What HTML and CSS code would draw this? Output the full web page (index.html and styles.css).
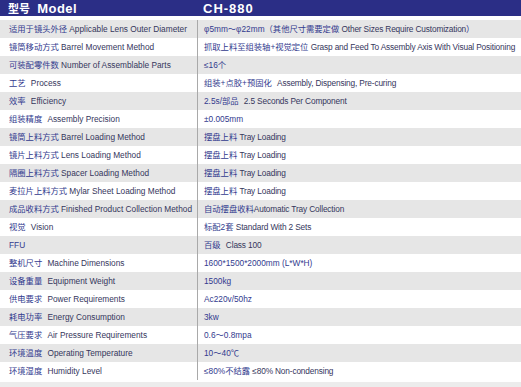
FILE: index.html
```html
<!DOCTYPE html>
<html lang="zh">
<head>
<meta charset="utf-8">
<title>CH-880</title>
<link rel="stylesheet" href="styles.css">
</head>
<body>
<div class="sheet">
  <div class="head">
    <div class="head-l"><span class="hz">型号</span> <span class="hm">Model</span></div>
    <div class="head-r">CH-880</div>
  </div>
  <div class="spec">
    <div class="row odd"><div class="k"><span class="zh">适用于镜头外径</span> <span class="en">Applicable Lens Outer Diameter</span></div><div class="v"><span class="zh">φ5mm～φ22mm（其他尺寸需要定做</span> <span class="en">Other Sizes Require Customization</span><span class="zh">）</span></div></div>
    <div class="row"><div class="k"><span class="zh">镜筒移动方式</span> <span class="en">Barrel Movement Method</span></div><div class="v"><span class="zh">抓取上料至组装轴+视觉定位</span> <span class="en">Grasp and Feed To Assembly Axis With Visual Positioning</span></div></div>
    <div class="row odd"><div class="k"><span class="zh">可装配零件数</span> <span class="en">Number of Assemblable Parts</span></div><div class="v"><span class="zh">≤16个</span></div></div>
    <div class="row"><div class="k"><span class="zh">工艺</span> <span class="en gap">Process</span></div><div class="v"><span class="zh">组装+点胶+预固化</span> <span class="en gap">Assembly, Dispensing, Pre-curing</span></div></div>
    <div class="row odd"><div class="k"><span class="zh">效率</span> <span class="en gap">Efficiency</span></div><div class="v"><span class="zh">2.5s/部品</span> <span class="en gap">2.5 Seconds Per Component</span></div></div>
    <div class="row"><div class="k"><span class="zh">组装精度</span> <span class="en gap">Assembly Precision</span></div><div class="v"><span class="zh">±0.005mm</span></div></div>
    <div class="row odd"><div class="k"><span class="zh">镜筒上料方式</span> <span class="en">Barrel Loading Method</span></div><div class="v"><span class="zh">摆盘上料</span> <span class="en">Tray Loading</span></div></div>
    <div class="row"><div class="k"><span class="zh">镜片上料方式</span> <span class="en">Lens Loading Method</span></div><div class="v"><span class="zh">摆盘上料</span> <span class="en">Tray Loading</span></div></div>
    <div class="row odd"><div class="k"><span class="zh">隔圈上料方式</span> <span class="en">Spacer Loading Method</span></div><div class="v"><span class="zh">摆盘上料</span> <span class="en">Tray Loading</span></div></div>
    <div class="row"><div class="k"><span class="zh">麦拉片上料方式</span> <span class="en">Mylar Sheet Loading Method</span></div><div class="v"><span class="zh">摆盘上料</span> <span class="en">Tray Loading</span></div></div>
    <div class="row odd"><div class="k"><span class="zh">成品收料方式</span> <span class="en">Finished Product Collection Method</span></div><div class="v"><span class="zh">自动摆盘收料</span><span class="en">Automatic Tray Collection</span></div></div>
    <div class="row"><div class="k"><span class="zh">视觉</span> <span class="en gap">Vision</span></div><div class="v"><span class="zh">标配2套</span> <span class="en">Standard With 2 Sets</span></div></div>
    <div class="row odd"><div class="k"><span class="zh">FFU</span></div><div class="v"><span class="zh">百级</span> <span class="en gap">Class 100</span></div></div>
    <div class="row"><div class="k"><span class="zh">整机尺寸</span> <span class="en gap">Machine Dimensions</span></div><div class="v"><span class="zh">1600*1500*2000mm (L*W*H)</span></div></div>
    <div class="row odd"><div class="k"><span class="zh">设备重量</span> <span class="en gap">Equipment Weight</span></div><div class="v"><span class="zh">1500kg</span></div></div>
    <div class="row"><div class="k"><span class="zh">供电要求</span> <span class="en gap">Power Requirements</span></div><div class="v"><span class="zh">Ac220v/50hz</span></div></div>
    <div class="row odd"><div class="k"><span class="zh">耗电功率</span> <span class="en gap">Energy Consumption</span></div><div class="v"><span class="zh">3kw</span></div></div>
    <div class="row"><div class="k"><span class="zh">气压要求</span> <span class="en gap">Air Pressure Requirements</span></div><div class="v"><span class="zh">0.6～0.8mpa</span></div></div>
    <div class="row odd"><div class="k"><span class="zh">环境温度</span> <span class="en gap">Operating Temperature</span></div><div class="v"><span class="zh">10～40℃</span></div></div>
    <div class="row"><div class="k"><span class="zh">环境湿度</span> <span class="en gap">Humidity Level</span></div><div class="v"><span class="zh">≤80%不结露</span> <span class="en">≤80% Non-condensing</span></div></div>
  </div>
  <div class="foot"></div>
</div>
</body>
</html>
```
FILE: styles.css
```css
html, body {
  margin: 0;
  padding: 0;
  background: #ffffff;
}
.sheet {
  width: 521px;
  font-family: "Liberation Sans", "Noto Sans CJK SC", sans-serif;
}
.head {
  display: grid;
  grid-template-columns: 197px 1fr;
  height: 16px;
  background: #2b2e86;
  color: #ffffff;
  font-weight: bold;
  align-items: center;
  margin-bottom: 4px;
}
.head-l {
  padding-left: 8px;
  font-size: 12px;
  line-height: 16px;
  white-space: nowrap;
}
.hz {
  font-size: 11px;
  font-family: "Noto Sans CJK SC", sans-serif;
  font-weight: bold;
}
.hm {
  font-size: 13px;
  letter-spacing: 0.4px;
  margin-left: 4px;
}
.head-r {
  padding-left: 6px;
  font-size: 13px;
  letter-spacing: 1px;
  line-height: 16px;
}
.spec {
  display: flex;
  flex-direction: column;
}
.row {
  display: grid;
  grid-template-columns: 197px 1fr;
  height: 18px;
  align-items: center;
  background: #ffffff;
}
.row.odd {
  background: #e6e6e6;
}
.k, .v {
  white-space: nowrap;
  font-size: 8px;
  line-height: 18px;
  height: 18px;
  overflow: hidden;
}
.k {
  padding-left: 9px;
}
.v {
  padding-left: 6px;
  border-left: 1px solid #a9a9a9;
}
.zh {
  color: #323a8e;
  font-family: "Liberation Sans", "Noto Sans CJK SC", sans-serif;
  font-size: 8.3px;
}
.en {
  color: #35365c;
  font-size: 8.3px;
}
.v .en {
  letter-spacing: -0.15px;
}
.en.gap {
  margin-left: 3px;
}
.foot {
  height: 7px;
  margin-top: 2px;
  background: #ececec;
}
```
